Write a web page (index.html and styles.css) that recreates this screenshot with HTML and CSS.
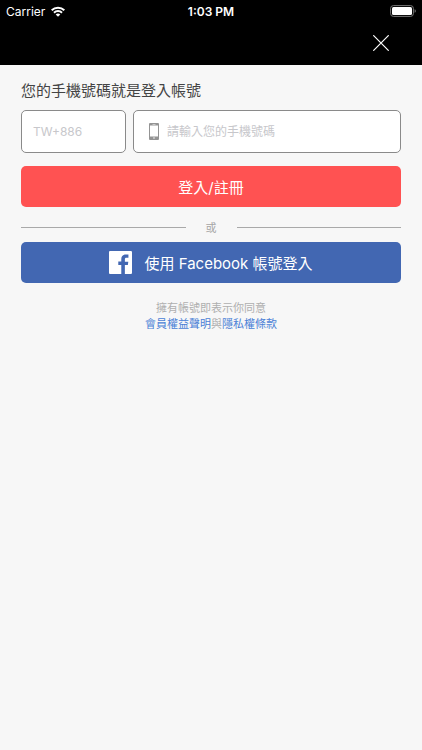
FILE: index.html
```html
<!DOCTYPE html>
<html lang="zh-Hant">
<head>
  <meta charset="utf-8">
  <meta name="viewport" content="width=device-width, initial-scale=1">
  <title>登入/註冊</title>
  <link rel="stylesheet" href="styles.css">
</head>
<body>
  <header class="top">
    <div class="status">
      <div class="carrier">
        <span>Carrier</span>
        <svg width="14" height="11" viewBox="0 0 14 11" fill="none" stroke="#fff" stroke-width="2" aria-hidden="true">
          <path d="M.7 4.2a9 9 0 0 1 12.6 0"/>
          <path d="M3 6.7a5.700 5.700 0 0 1 8 0"/>
          <path d="M7 10.800 4.700 8.500a3.300 3.300 0 0 1 4.600 0z" fill="#fff" stroke="none"/>
        </svg>
      </div>
      <time class="clock">1:03 PM</time>
      <div class="battery">
        <svg width="27" height="12" viewBox="0 0 27 12" aria-hidden="true">
          <rect x="1.600" y=".6" width="22.800" height="10.800" rx="2.800" fill="none" stroke="#777" stroke-width="1"/>
          <rect x="3" y="2" width="20" height="8" rx="1.500" fill="#fff"/>
          <path d="M25.600 4.200c1.600.5 1.600 3.100 0 3.600z" fill="#777"/>
        </svg>
      </div>
    </div>
    <nav class="bar">
      <button class="close" type="button" aria-label="關閉">
        <svg width="16" height="16" viewBox="0 0 16 16" stroke="#fff" stroke-width="1.200" aria-hidden="true">
          <path d="M.3.300l15.400 15.400M15.700.300.300 15.700"/>
        </svg>
      </button>
    </nav>
  </header>

  <main class="content">
    <form class="login">
      <h1 class="title">您的手機號碼就是登入帳號</h1>
      <div class="fields">
        <div class="field field-code">
          <input type="text" aria-label="國碼" placeholder="TW+886">
        </div>
        <label class="field field-phone">
          <svg width="10" height="17" viewBox="0 0 10 17" aria-hidden="true">
            <path fill="#949494" fill-rule="evenodd" d="M1 0h8a1 1 0 0 1 1 1v15a1 1 0 0 1-1 1H1a1 1 0 0 1-1-1V1a1 1 0 0 1 1-1zM1 2.500v11h8v-11zM3.500 1v.6h3V1zM4.200 14.600v1h1.600v-1z"/>
          </svg>
          <input type="tel" aria-label="手機號碼" placeholder="請輸入您的手機號碼">
        </label>
      </div>
      <button class="button primary" type="submit">登入/註冊</button>
      <div class="divider"><span>或</span></div>
      <button class="button facebook" type="button">
        <svg width="23" height="23" viewBox="0 0 24 24" aria-hidden="true">
          <path fill="#fff" d="M22.676 0H1.324C.593 0 0 .593 0 1.324v21.352C0 23.408.593 24 1.324 24h11.494v-9.294H9.689v-3.621h3.129V8.410c0-3.099 1.894-4.785 4.659-4.785 1.325 0 2.464.097 2.796.141v3.240h-1.921c-1.500 0-1.792.721-1.792 1.771v2.311h3.584l-.465 3.630H16.560V24h6.115c.733 0 1.325-.592 1.325-1.324V1.324C24 .593 23.408 0 22.676 0"/>
        </svg>
        <span>使用 Facebook 帳號登入</span>
      </button>
    </form>
    <p class="terms">擁有帳號即表示你同意<br><a href="#rights">會員權益聲明</a>與<a href="#privacy">隱私權條款</a></p>
  </main>
</body>
</html>
```

FILE: styles.css
```css
* {
  box-sizing: border-box;
}

body {
  margin: 0;
  min-height: 100vh;
  background: #f7f7f7;
  color: #444;
  font-family: Inter, "Noto Sans CJK TC", sans-serif;
}

button,
input {
  font: inherit;
}

.top {
  background: #000;
  color: #fff;
}

.status {
  display: grid;
  grid-template-columns: 1fr auto 1fr;
  align-items: center;
  height: 22px;
  padding: 0 6px;
  font-size: 12px;
}

.carrier {
  display: flex;
  align-items: center;
  gap: 6px;
}

.clock {
  font-weight: 600;
}

.battery {
  display: flex;
  justify-content: flex-end;
}

.bar {
  display: flex;
  justify-content: flex-end;
  align-items: flex-start;
  height: 43px;
  padding: 0 20px;
}

.close {
  display: grid;
  place-items: center;
  width: 42px;
  height: 42px;
  padding: 0;
  border: 0;
  background: none;
}

.content {
  padding: 15px 21px;
}

.login {
  display: flex;
  flex-direction: column;
}

.title {
  margin: 0 0 8px;
  font-size: 15px;
  line-height: 22px;
  font-weight: 400;
}

.fields {
  display: grid;
  grid-template-columns: 105px 1fr;
  gap: 7px;
  margin-bottom: 13px;
}

.field {
  display: flex;
  align-items: center;
  gap: 8px;
  height: 43px;
  padding: 0 11px;
  border: 1px solid #8a8a8a;
  border-radius: 5px;
  background: #fff;
}

.field-phone {
  padding-left: 15px;
}

.field input {
  flex: 1;
  min-width: 0;
  padding: 0;
  border: 0;
  outline: 0;
  background: none;
  color: #444;
  font-size: 12px;
}

.field input::placeholder {
  color: #c7c7cb;
  opacity: 1;
}

.button {
  display: flex;
  justify-content: center;
  align-items: center;
  gap: 12px;
  height: 41px;
  padding: 0;
  border: 0;
  border-radius: 5px;
  color: #fff;
  font-size: 15px;
}

.primary {
  background: #ff5252;
}

.facebook {
  background: #4267b2;
}

.divider {
  display: flex;
  align-items: center;
  gap: 20px;
  height: 35px;
  padding-top: 5px;
  color: #a5a5a5;
  font-size: 11px;
}

.divider::before,
.divider::after {
  content: "";
  flex: 1;
  height: 1px;
  background: #a9a9a9;
}

.terms {
  margin: 17px 0 0;
  color: #afafaf;
  font-size: 11px;
  line-height: 16px;
  text-align: center;
}

.terms a {
  color: #4a7fd6;
  text-decoration: none;
}
```
